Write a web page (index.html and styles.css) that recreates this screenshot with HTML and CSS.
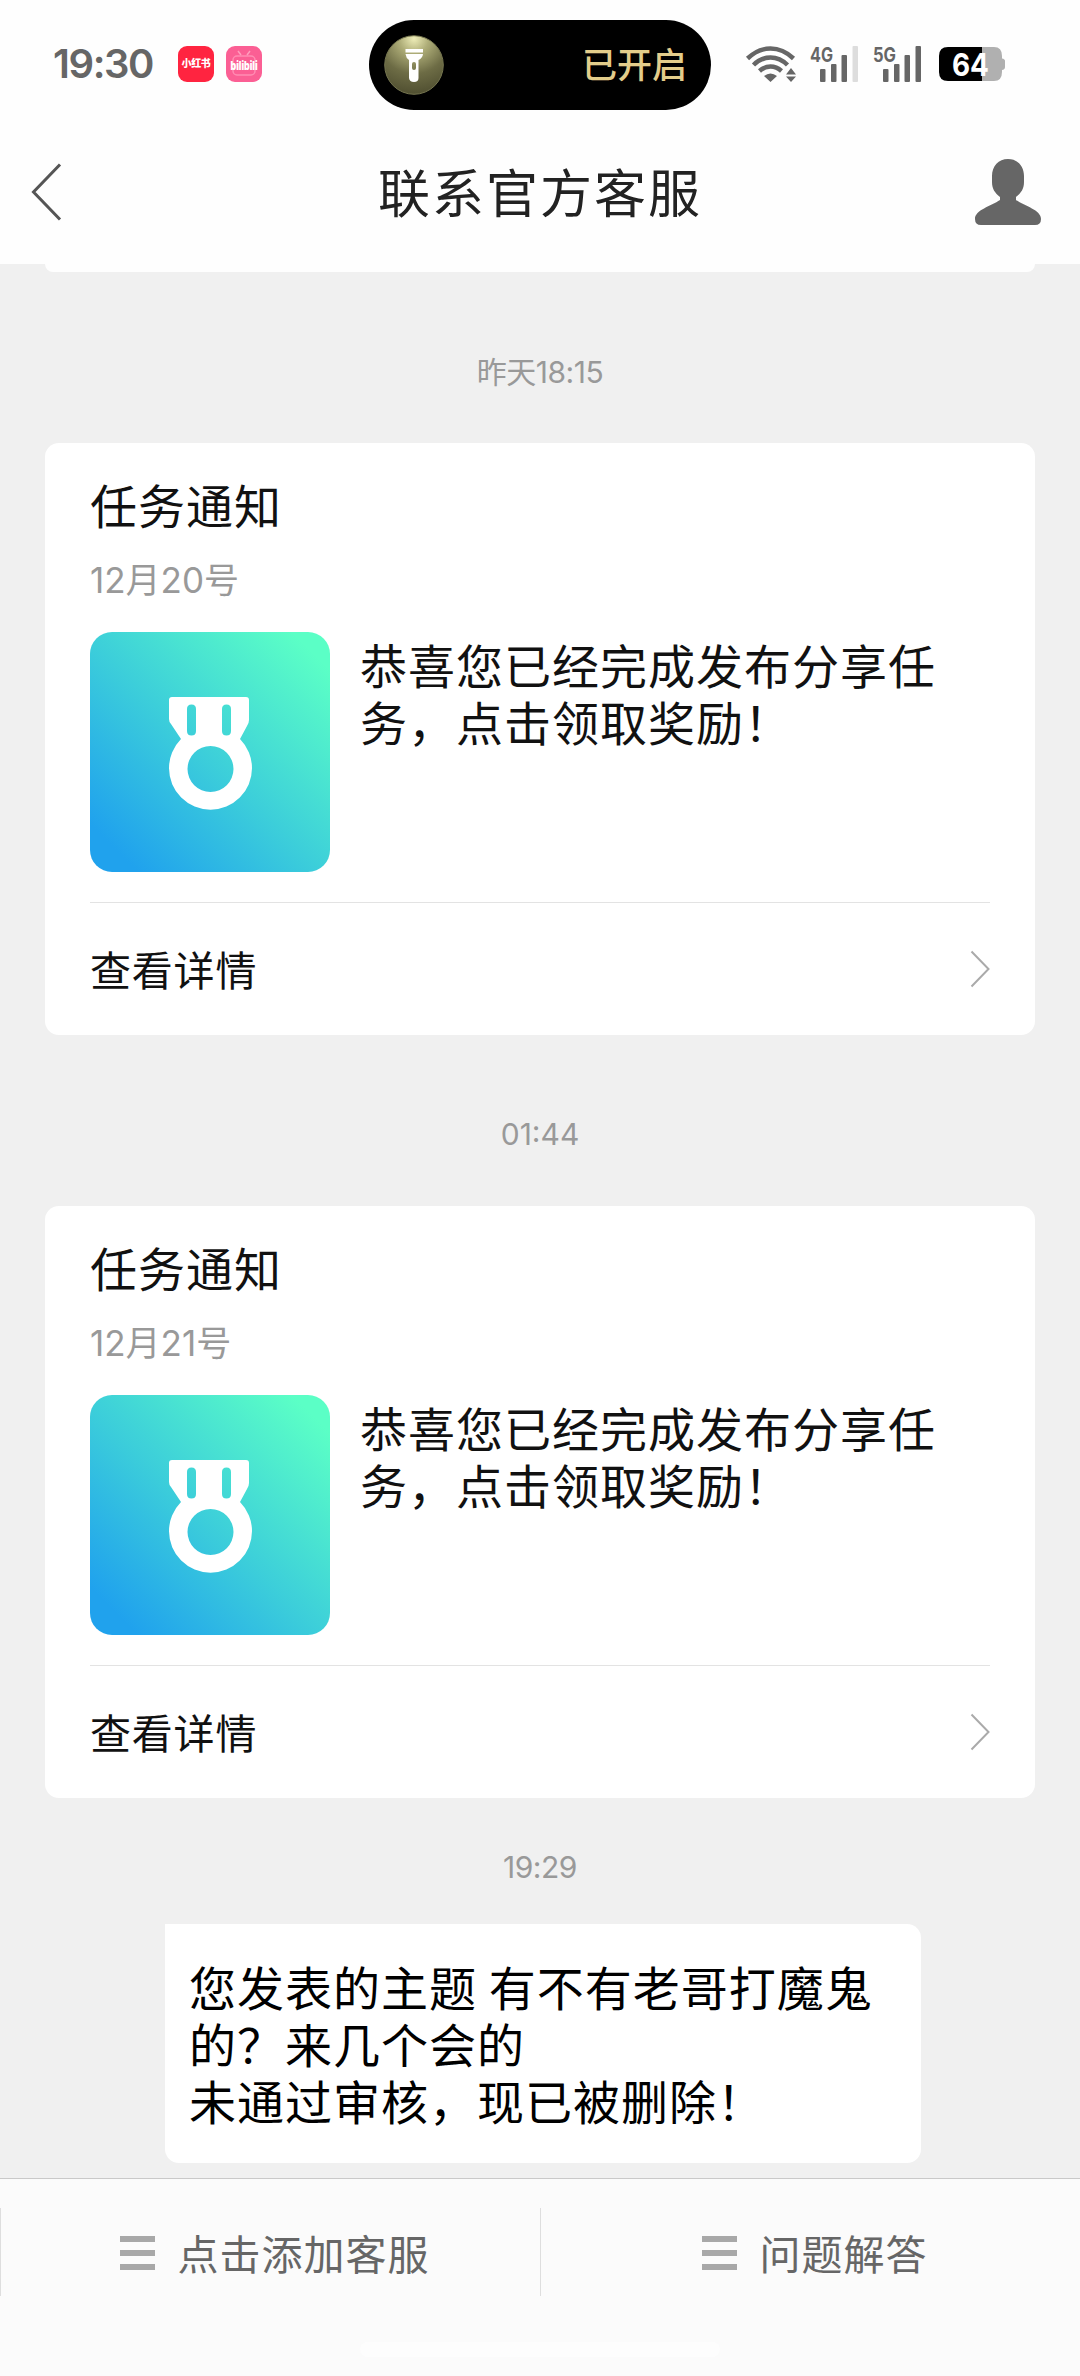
FILE: index.html
```html
<!DOCTYPE html>
<html lang="zh-CN">
<head>
<meta charset="utf-8">
<title>联系官方客服</title>
<link rel="stylesheet" href="styles.css">
</head>
<body>
<svg width="0" height="0" class="defs" aria-hidden="true">
  <symbol id="medal" viewBox="0 0 240 240">
    <path fill="#fff" fill-rule="evenodd" d="M82 65H156Q159 65 159 68V88Q159 91 157 94L150 107A41.500 41.500 0 1 1 91 107Q91 107 89 104L81 92Q79 90 79 87V68Q79 65 82 65ZM101.500 72.500Q97 72.500 97 77V99Q97 103.500 101.500 103.500T106 99V77Q106 72.500 101.500 72.500ZM136.500 72.500Q132 72.500 132 77V99Q132 103.500 136.500 103.500T141 99V77Q141 72.500 136.500 72.500ZM120.500 114A23 23 0 1 0 120.500 160A23 23 0 1 0 120.500 114Z"/>
  </symbol>
  <symbol id="next" viewBox="0 0 22 40">
    <path d="M3.500 2.500L20.500 20L3.500 37.500" fill="none" stroke="#aaa" stroke-width="2"/>
  </symbol>
  <symbol id="menu" viewBox="0 0 35 34">
    <path d="M0 0H35V6H0ZM0 14H35V20H0ZM0 28H35V34H0Z" fill="#a8a8a8"/>
  </symbol>
</svg>

<div class="screen">
  <header class="top">
    <div class="status">
      <span class="clock">19:30</span>
      <span class="app app-red">小红书</span>
      <svg class="app-bili" width="36" height="36" viewBox="0 0 36 36">
        <rect width="36" height="36" rx="9" fill="#fb5f94"/>
        <rect x="7" y="10" width="22" height="19" rx="4" fill="none" stroke="#ff8db3" stroke-width="1.500"/>
        <path d="M12 5l3 4M24 5l-3 4" stroke="#ff9dbd" stroke-width="1.500"/>
        <text x="4.500" y="23.500" textLength="27" lengthAdjust="spacingAndGlyphs" class="bili-text">bilibili</text>
      </svg>
      <div class="island">
        <svg width="60" height="60" viewBox="0 0 60 60">
          <defs>
            <radialGradient id="glow" cx=".5" cy=".05" r="1">
              <stop offset="0" stop-color="#eeedb8"/>
              <stop offset=".25" stop-color="#aead78"/>
              <stop offset=".6" stop-color="#6d6c45"/>
              <stop offset="1" stop-color="#4c4b2e"/>
            </radialGradient>
          </defs>
          <circle cx="30" cy="30" r="29.300" fill="url(#glow)" stroke="#75754f" stroke-width="1"/>
          <path fill="#fff" fill-rule="evenodd" d="M21.500 14H39V17.500H21.500ZM21.500 19H39Q38.500 23 34.500 25V43Q34.500 47 30 47T25 43V25Q22 23 21.500 19ZM30 27Q28 27 28 29V33Q28 35 30 35T32 33V29Q32 27 30 27Z"/>
        </svg>
        <span class="island-text">已开启</span>
      </div>
      <svg class="wifi" width="51" height="38" viewBox="0 0 51 38">
        <g fill="none" stroke="#666" stroke-width="4.500">
          <path d="M1.500 13.500Q12 3.500 24.500 3.500T47.500 13.500"/>
          <path d="M7.500 20Q15 12.500 24.500 12.500T41.500 20"/>
          <path d="M13.500 26Q18.500 21.500 24.500 21.500T35.500 26"/>
        </g>
        <path d="M24.500 37L18 31Q24.500 26 31 31ZM45 23L50 29.500H40ZM45 37L40 31.500H50Z" fill="#666"/>
      </svg>
      <svg class="signal" width="49" height="38" viewBox="0 0 49 38">
        <text x="0" y="16.500" textLength="23" lengthAdjust="spacingAndGlyphs" class="net">4G</text>
        <g fill="#666"><rect x="10" y="24" width="5.500" height="13" rx="1"/><rect x="21" y="19" width="5.500" height="18" rx="1"/><rect x="31.500" y="10" width="5.500" height="27" rx="1"/></g>
        <rect x="42.500" y="1" width="5.500" height="36" rx="1" fill="#ddd"/>
      </svg>
      <svg class="signal" width="49" height="38" viewBox="0 0 49 38">
        <text x="0" y="16.500" textLength="23" lengthAdjust="spacingAndGlyphs" class="net">5G</text>
        <g fill="#666"><rect x="10" y="24" width="5.500" height="13" rx="1"/><rect x="21" y="19" width="5.500" height="18" rx="1"/><rect x="31.500" y="10" width="5.500" height="27" rx="1"/><rect x="42.500" y="1" width="5.500" height="36" rx="1"/></g>
      </svg>
      <svg class="battery" width="67" height="34" viewBox="0 0 67 34">
        <path d="M43 0H55Q63 0 63 9V11.500Q66 12 66 14V20Q66 22.500 63 23V25Q63 34 55 34H43Z" fill="#b0b0b0"/>
        <path d="M9 0H43V34H9Q0 34 0 25V9Q0 0 9 0Z" fill="#000"/>
        <text x="13" y="28.500" textLength="37" lengthAdjust="spacingAndGlyphs" class="charge">64</text>
      </svg>
    </div>
    <div class="nav">
      <svg width="30" height="58" viewBox="0 0 30 58">
        <path d="M29 1.500L2.500 29L29 56.500" fill="none" stroke="#555" stroke-width="3"/>
      </svg>
      <h1>联系官方客服</h1>
      <svg class="person" width="66" height="67" viewBox="0 0 66 67">
        <path d="M33 0C42.500 0 49 7 49 17V23C49 30 46 34 41 38V41C50 47 66 51 66 60Q66 66 60 66H6Q0 66 0 60C0 51 16 47 25 41V38C20 34 17 30 17 23V17C17 7 23.500 0 33 0Z" fill="#666"/>
      </svg>
    </div>
  </header>

  <main class="chat">
    <div class="prev-card"></div>
    <time class="t1">昨天18:15</time>
    <article class="card">
      <h2>任务通知</h2>
      <p class="date">12月20号</p>
      <div class="body">
        <svg class="badge"><use href="#medal"/></svg>
        <p class="message">恭喜您已经完成发布分享任务，点击领取奖励！</p>
      </div>
      <div class="more"><span>查看详情</span><svg width="22" height="40"><use href="#next"/></svg></div>
    </article>
    <time class="t2">01:44</time>
    <article class="card">
      <h2>任务通知</h2>
      <p class="date">12月21号</p>
      <div class="body">
        <svg class="badge"><use href="#medal"/></svg>
        <p class="message">恭喜您已经完成发布分享任务，点击领取奖励！</p>
      </div>
      <div class="more"><span>查看详情</span><svg width="22" height="40"><use href="#next"/></svg></div>
    </article>
    <time class="t3">19:29</time>
    <div class="bubble">您发表的主题 有不有老哥打魔鬼的？来几个会的<br>未通过审核，现已被删除！</div>
  </main>

  <footer class="bottom">
    <div class="tabs">
      <div class="tab"><svg width="35" height="34"><use href="#menu"/></svg><span>点击添加客服</span></div>
      <div class="tab"><svg width="35" height="34"><use href="#menu"/></svg><span>问题解答</span></div>
    </div>
    <div class="home"></div>
  </footer>
</div>
</body>
</html>
```

FILE: styles.css
```css
* { box-sizing: border-box; }
body, h1, h2, p { margin: 0; font-weight: 400; }
body { font-family: Inter, "Noto Sans CJK SC", sans-serif; color: #111; background: #f0f0f0; }
svg { display: block; flex: none; overflow: visible; }
.defs { position: absolute; }
.screen { width: 1080px; height: 2376px; display: flex; flex-direction: column; overflow: hidden; }

.top { height: 264px; flex: none; background: #fefefe; }
.status { height: 128px; padding-left: 53px; display: flex; align-items: center; }
.status > * { flex: none; }
.clock { width: 125px; font-size: 40px; font-weight: 600; line-height: 48px; letter-spacing: -1.4px; color: #666; }
.app { width: 36px; height: 36px; border-radius: 9px; text-align: center; white-space: nowrap; }
.app-red { margin-right: 12px; background: #ff2440; color: #fff; font-size: 10px; font-weight: 900; line-height: 35px; letter-spacing: -.4px; }
.bili-text { font: 900 12px Inter, sans-serif; fill: #fff; }
.island { width: 342px; height: 90px; margin: 2px 35px 0 107px; padding: 0 24px 0 15px; display: flex; align-items: center; justify-content: space-between; border-radius: 45px; background: #000; }
.island-text { font-size: 35px; font-weight: 500; line-height: 50px; color: #e3cd8b; }
.wifi { margin-right: 13px; }
.signal { margin-right: 14px; }
.signal + .battery { margin-left: 3px; }
.net { font: 700 20px Inter, sans-serif; fill: #666; }
.charge { font: 700 31px Inter, sans-serif; fill: #fff; }

.nav { height: 128px; padding: 0 39px 0 31px; display: grid; grid-template-columns: 74px 1fr 66px; align-items: center; }
.nav h1 { padding-top: 5px; font-size: 52px; line-height: 72px; letter-spacing: 2px; color: #222; text-align: center; }

.chat { height: 1914px; flex: none; display: flex; flex-direction: column; align-items: center; }
.prev-card { width: 990px; height: 8px; border-radius: 0 0 14px 14px; background: #fefefe; }
time { font-size: 30px; line-height: 40px; letter-spacing: -.5px; color: #999; }
.t1 { margin: 80px 0 51px; }
.t2 { margin: 79px 0 52px; letter-spacing: 0; }
.t3 { margin: 49px 0 37px; }
.card { width: 990px; height: 592px; flex: none; padding: 34px 45px 0; border-radius: 14px; background: #fff; }
.card h2 { font-size: 47px; line-height: 60px; letter-spacing: 1px; }
.date { margin-top: 22px; font-size: 35px; line-height: 42px; color: #999; }
.body { height: 271px; margin-top: 31px; display: flex; gap: 30px; border-bottom: 1px solid #e3e3e3; }
.badge { width: 240px; height: 240px; border-radius: 22px; background: linear-gradient(45deg, #20a2ed 10%, #3cceda 48%, #5bffc6 92%); }
.message { padding-top: 6px; font-size: 47px; line-height: 57px; letter-spacing: 1px; width: 600px; }
.more { height: 132px; display: flex; align-items: center; justify-content: space-between; font-size: 41px; letter-spacing: .8px; }
.more span { padding-bottom: 2px; }
.bubble { width: 756px; height: 239px; align-self: flex-start; margin-left: 165px; padding: 36px 20px 0 24px; border-radius: 0 14px 14px 14px; background: #fff; color: #000; font-size: 47px; line-height: 57px; letter-spacing: 1px; word-spacing: -2.5px; }

.bottom { height: 198px; flex: none; background: #fbfbfb; border-top: 1px solid #c9c9c9; display: flex; flex-direction: column; align-items: center; }
.tabs { width: 1080px; height: 88px; margin-top: 29px; display: flex; }
.tab { width: 540px; padding-left: 8px; border-left: 1px solid #dedede; display: flex; align-items: center; justify-content: center; gap: 23px; font-size: 41px; letter-spacing: 1px; color: #666; }
.tab svg { margin-top: 2px; }
.home { width: 360px; height: 15px; margin-top: 46px; border-radius: 8px; background: #fdfdfd; }
```
